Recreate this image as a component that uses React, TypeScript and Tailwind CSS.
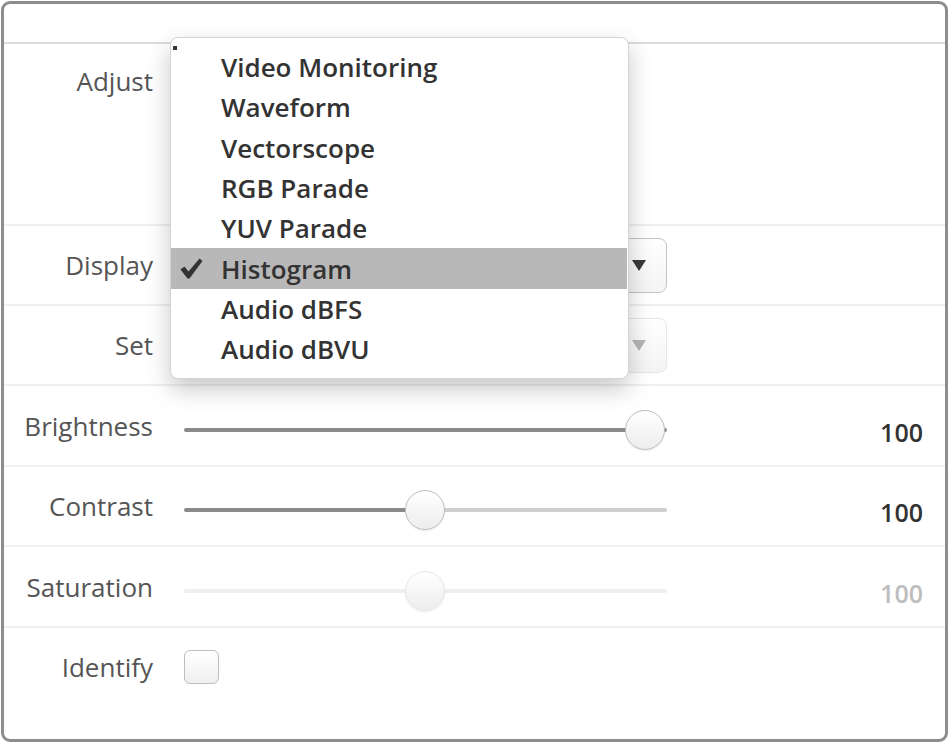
const menuItems = [
  'Video Monitoring',
  'Waveform',
  'Vectorscope',
  'RGB Parade',
  'YUV Parade',
  'Histogram',
  'Audio dBFS',
  'Audio dBVU',
]

function Label({ text }: { text: string }) {
  return (
    <div className="w-[149px] shrink-0 text-right text-[26px] leading-[30px] text-[#555]">
      {text}
    </div>
  )
}

function Select({ disabled }: { disabled?: boolean }) {
  return (
    <div
      className={
        'flex h-[55px] w-[483px] items-center justify-end rounded-[8px] border bg-gradient-to-b from-white to-[#f4f4f4] pr-[20px] ' +
        (disabled ? 'border-[#e6e6e6]' : 'border-[#c4c4c4]')
      }
    >
      <svg width="14" height="11" viewBox="0 0 14 11">
        <path d="M0 0 L14 0 L7 11 Z" fill={disabled ? '#b5b5b5' : '#3a3a3a'} />
      </svg>
    </div>
  )
}

function Slider({ pos, fill, rest, thumb }: { pos: number; fill: string; rest: string; thumb: string }) {
  return (
    <div className="relative mt-[8px] h-[40px] w-[483px]">
      <div className="absolute left-0 right-0 top-[18px] flex h-[4px] overflow-hidden rounded-full">
        <div style={{ width: pos, background: fill }} />
        <div className="flex-1" style={{ background: rest }} />
      </div>
      <div
        className="absolute top-0 h-[40px] w-[40px] rounded-full border-[1.5px] bg-gradient-to-b from-white to-[#ededed] shadow-[0_1px_2px_rgba(0,0,0,0.08)]"
        style={{ left: pos - 20, borderColor: thumb }}
      />
    </div>
  )
}

function Value({ text, dim }: { text: string; dim?: boolean }) {
  return (
    <div
      className={
        'ml-auto mr-[22px] mt-[12px] text-[25px] font-semibold leading-[30px] ' +
        (dim ? 'text-[#bdbdbd]' : 'text-[#333]')
      }
    >
      {text}
    </div>
  )
}

function HeavyCheck() {
  return (
    <svg width="23" height="21" viewBox="0 0 23 21">
      <path d="M0.5 11.5 L4.5 8.5 L8.5 13.5 L19.5 0.5 L22.5 3 L9.5 20.5 L7.5 20.5 Z" fill="#333" />
    </svg>
  )
}

export default function App() {
  return (
    <div
      className="relative h-[743px] w-[950px] bg-white p-[1px]"
      style={{ fontFamily: '"Open Sans", "Noto Sans", sans-serif' }}
    >
      <div className="flex h-[741px] w-[947px] flex-col overflow-hidden rounded-[9px] border-[3px] border-[#8d8d8d] bg-white">
        <div className="h-[40px] shrink-0 border-b-2 border-[#dcdcdc]" />

        <div className="flex h-[182px] shrink-0 items-start gap-[31px] border-b-2 border-[#efefef] pt-[22px]">
          <Label text="Adjust" />
        </div>

        <div className="flex h-[80px] shrink-0 items-center gap-[31px] border-b-2 border-[#efefef]">
          <Label text="Display" />
          <Select />
        </div>

        <div className="flex h-[80px] shrink-0 items-center gap-[31px] border-b-2 border-[#efefef]">
          <Label text="Set" />
          <Select disabled />
        </div>

        <div className="flex h-[81px] shrink-0 items-center gap-[31px] border-b-2 border-[#efefef]">
          <Label text="Brightness" />
          <Slider pos={461} fill="#8a8a8a" rest="#8a8a8a" thumb="#bdbdbd" />
          <Value text="100" />
        </div>

        <div className="flex h-[80px] shrink-0 items-center gap-[31px] border-b-2 border-[#efefef]">
          <Label text="Contrast" />
          <Slider pos={241} fill="#8a8a8a" rest="#cfcfcf" thumb="#bdbdbd" />
          <Value text="100" />
        </div>

        <div className="flex h-[81px] shrink-0 items-center gap-[31px] border-b-2 border-[#efefef]">
          <Label text="Saturation" />
          <Slider pos={241} fill="#efefef" rest="#efefef" thumb="#e6e6e6" />
          <Value text="100" dim />
        </div>

        <div className="flex flex-1 items-start gap-[31px] pt-[22px]">
          <div className="flex h-[34px] items-center">
            <Label text="Identify" />
          </div>
          <div className="h-[34px] w-[35px] rounded-[6px] border-[1.5px] border-[#bdbdbd] bg-gradient-to-b from-white to-[#efefef]" />
        </div>
      </div>

      <div className="absolute left-[170px] top-[37px] w-[459px] rounded-[8px] border border-[#d4d4d4] bg-white py-[9px] shadow-[0_10px_24px_rgba(0,0,0,0.22)]">
        <div className="absolute left-[2px] top-[8px] h-[4px] w-[4px] bg-[#333]" />
        {menuItems.map((item) => {
          const selected = item === 'Histogram'
          return (
            <div
              key={item}
              className={
                'flex h-[40.3px] items-center text-[26px] font-semibold leading-none text-[#333] ' +
                (selected ? 'mr-[1px] bg-[#b8b8b8]' : '')
              }
            >
              <div className="flex w-[50px] shrink-0 items-center pl-[9px]">
                {selected && <HeavyCheck />}
              </div>
              <span>{item}</span>
            </div>
          )
        })}
      </div>
    </div>
  )
}
